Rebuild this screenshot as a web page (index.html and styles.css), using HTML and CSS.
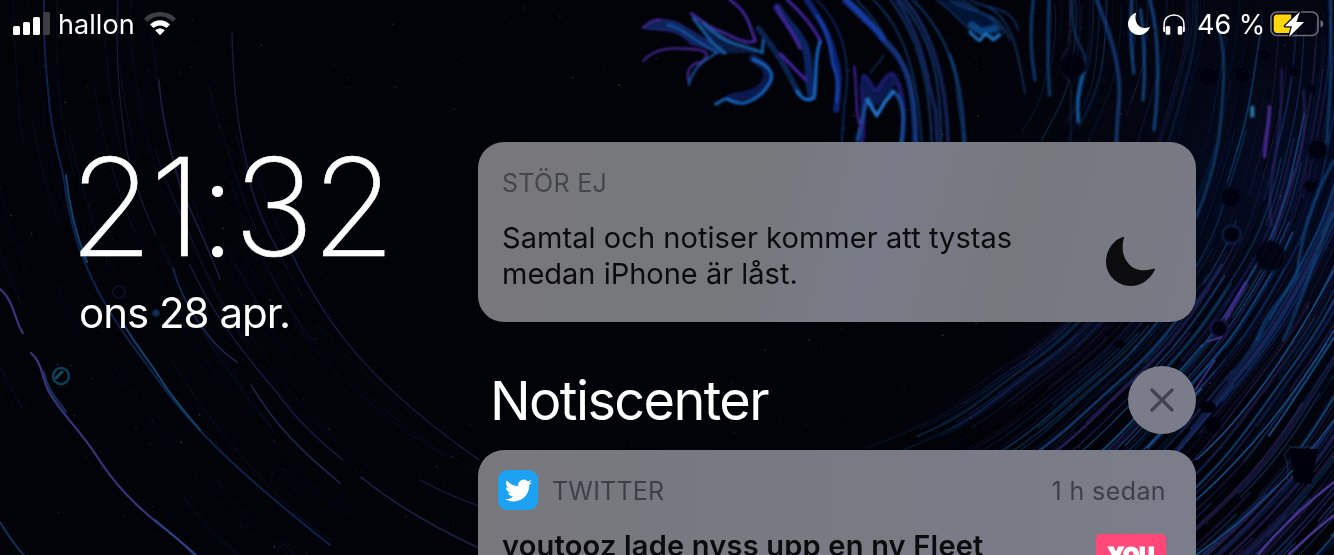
FILE: index.html
```html
<!DOCTYPE html>
<html lang="sv">
<head>
<meta charset="utf-8">
<title>Låsskärm</title>
<link rel="stylesheet" href="styles.css">
</head>
<body>
<svg class="wallpaper" viewBox="0 0 1334 555" aria-hidden="true">
  <defs>
    <filter id="soft" x="-10%" y="-10%" width="120%" height="120%"><feGaussianBlur stdDeviation="0.7"/></filter>
    <filter id="paint" x="-10%" y="-10%" width="120%" height="120%"><feTurbulence type="fractalNoise" baseFrequency="0.04" numOctaves="2" seed="4" result="n"/><feDisplacementMap in="SourceGraphic" in2="n" scale="5" xChannelSelector="R" yChannelSelector="G"/><feGaussianBlur stdDeviation="3.2"/></filter>
    <radialGradient id="haze" gradientUnits="userSpaceOnUse" cx="1290" cy="190" r="380">
      <stop offset="0" stop-color="#07133a"/><stop offset="1" stop-color="#020309" stop-opacity="0"/>
    </radialGradient>
  </defs>
  <rect width="1334" height="555" fill="#020309"/>
  <rect width="1334" height="555" fill="url(#haze)" opacity=".55"/>
  <g id="streaks" fill="none" filter="url(#soft)" stroke-linecap="round"></g>

  <!-- long arcs on the left -->
  <g fill="none" filter="url(#soft)" stroke-linecap="round">
    <g opacity=".6">
    <path d="M44 0C43 40 46 75 50 110C55 150 62 165 64 180C70 225 80 255 96 287C115 325 140 355 158 380C190 425 235 470 330 545" stroke="#18397a" stroke-width="2"/>
    <path d="M66 175C70 215 78 240 87 262M124 325C138 348 150 362 160 378C170 395 185 412 200 430" stroke="#2069ab" stroke-width="2"/>
    </g>
    <path d="M0 289C14 300 16 325 23 333M31 353C42 362 42 378 48 390C58 410 80 430 96 455C115 485 135 505 160 525C170 533 182 542 196 555" stroke="#4c3d96" stroke-width="2.2" opacity=".8"/>
    <path d="M44 372C47 390 58 400 66 412M155 520C170 532 182 542 194 555M0 522C8 535 16 547 24 555" stroke="#1c518e" stroke-width="2" opacity=".6"/>
    <g opacity=".6">
    <path d="M118 0C115 60 120 105 126 147C132 180 145 210 156 235" stroke="#302659" stroke-width="1.2"/>
    <path d="M159 80C162 120 170 150 180 185C192 215 205 240 220 279" stroke="#35306d" stroke-width="1.5"/>
    <path d="M232 33C233 80 236 120 246 160C250 190 260 220 278 250" stroke="#28235a" stroke-width="1.5"/>
    <path d="M173 268C183 305 210 345 237 362M251 385C275 425 300 450 340 483M361 477C395 505 440 530 479 548" stroke="#303d79" stroke-width="1.5"/>
    <path d="M190 265C210 310 240 350 275 390C300 425 325 445 343 460M290 250C330 335 380 390 479 460M420 480Q448 495 479 506" stroke="#2a2b6b" stroke-width="1.4"/>
    <ellipse cx="61" cy="376" rx="8" ry="8" stroke="#15668c" stroke-width="2.5"/><path d="M56 378L62 372" stroke="#1b7899" stroke-width="3"/>
    <circle cx="119" cy="292" r="6" stroke="#0c1030" stroke-width="3"/><circle cx="156" cy="313" r="3" fill="#1c5b9b" stroke="#103868" stroke-width="2"/>
    </g>
  </g>
  <ellipse cx="28" cy="343" rx="9" ry="9" fill="#020309"/>

  <!-- marbled paint at the top -->
  <g transform="scale(.33333) translate(1800 0)" fill="none" filter="url(#paint)" stroke-linecap="round" stroke-linejoin="round" opacity=".92">
    <path d="M128 83C165 50 220 55 260 85L380 158C350 170 310 130 275 133C225 75 170 95 128 83Z" fill="#0b285f" stroke="#272985" stroke-width="5"/>
    <path d="M128 83C145 70 155 58 180 59M130 183C170 135 235 145 290 148C330 155 325 165 305 186C280 190 260 200 264 240" stroke="#4a2b9b" stroke-width="7"/>
    <path d="M203 75C248 83 270 115 352 158C300 185 278 212 266 254" stroke="#1755a5" stroke-width="7"/>
    <path d="M273 40C300 90 330 130 375 160L487 158C400 130 350 100 273 40Z" fill="#0a1d4c"/>
    <path d="M273 40C315 70 330 83 370 98C405 113 440 136 467 122C448 85 451 42 390 0" stroke="#4629a5" stroke-width="9"/>
    <path d="M280 55C320 105 330 130 375 160M310 70C390 143 415 127 487 158L490 118" stroke="#1660a8" stroke-width="9"/>
    <path d="M460 175C510 205 513 225 488 260C455 290 421 286 392 294" stroke="#0a1f56" stroke-width="26"/>
    <path d="M460 178C535 208 525 241 483 283C448 310 418 320 382 297C370 293 360 309 347 312" stroke="#1768c9" stroke-width="9"/>
    <path d="M475 85C560 190 575 248 598 281" stroke="#0d2859" stroke-width="17"/>
    <path d="M532 22C565 75 590 90 613 135C633 180 619 215 635 288" stroke="#10286b" stroke-width="24"/>
    <path d="M530 20C552 70 585 105 600 145M562 0C600 33 645 85 662 125M542 162L617 240" stroke="#4525a5" stroke-width="10"/>
    <path d="M590 273C608 299 622 305 642 294C652 245 641 176 660 126" stroke="#196bca" stroke-width="10"/>
    <path d="M620 0C660 55 690 105 705 175C724 225 714 270 709 330" stroke="#10277d" stroke-width="18"/>
    <path d="M651 48C690 100 690 155 700 200C715 230 715 270 710 305" stroke="#1745b4" stroke-width="9"/>
    <path d="M650 0C735 80 755 200 733 315L725 430" stroke="#112f71" stroke-width="5"/>
    <path d="M735 0C775 45 830 85 855 126C915 180 944 245 946 430" stroke="#12307f" stroke-width="17"/>
    <path d="M740 0C780 35 815 70 850 115" stroke="#163fb0" stroke-width="16"/>
    <path d="M770 0C820 50 840 85 860 120C920 180 945 250 950 430M820 0C905 80 954 205 965 430" stroke="#154a8a" stroke-width="4"/>
    <path d="M900 0C990 110 1023 215 1023 430M872 0C940 90 990 215 995 430M938 0C1025 80 1073 200 1075 300C1083 360 1090 390 1090 430" stroke="#103664" stroke-width="7"/>
    <path d="M890 0C980 135 980 250 1007 330L1012 430M915 0C1000 100 1040 240 1044 430" stroke="#142660" stroke-width="11"/>
    <path d="M785 430C800 310 779 270 792 228C812 236 810 270 828 273C845 260 859 220 878 223C908 262 918 330 905 430" stroke="#1d1c75" stroke-width="15"/>
    <path d="M792 250L828 305L878 245" stroke="#101c55" stroke-width="24"/>
    <path d="M772 420C782 380 792 330 803 295M905 425C912 365 915 302 880 274" stroke="#16509f" stroke-width="11"/>
    <path d="M803 300L830 347L854 307L880 274" stroke="#207bd9" stroke-width="11"/>
    <path d="M763 200C772 285 765 355 785 385" stroke="#3d2190" stroke-width="8"/>
    <path d="M812 220C831 182 837 197 851 165" stroke="#103357" stroke-width="5"/>
    <path d="M1010 0C1060 35 1078 65 1110 90L1143 104L1190 112L1200 82L1160 48L1090 0" fill="#06183a" stroke="#102c58" stroke-width="6"/>
    <path d="M1115 75L1145 95L1185 85" stroke="#10498c" stroke-width="20"/>
    <path d="M1110 98L1138 122L1157 101L1180 120L1200 105" stroke="#2376c8" stroke-width="9"/>
    <path d="M1050 0C1120 55 1185 10 1230 120M1110 0C1180 34 1230 15 1255 90M1130 10C1230 30 1250 130 1275 280M1070 5C1140 40 1180 40 1212 100" stroke="#123568" stroke-width="5"/>
  </g>

  <g transform="scale(.33333) translate(2850 0)" fill="none" filter="url(#paint)" stroke-linecap="round" opacity=".85">
    <path d="M0 165C30 240 40 330 45 430" stroke="#133e77" stroke-width="9"/>
    <path d="M250 0Q234 120 255 240M297 0C295 80 290 180 299 285" stroke="#123c78" stroke-width="10"/>
    <path d="M440 0C480 100 510 190 508 280C506 335 499 380 500 430" stroke="#153b77" stroke-width="12"/>
    <path d="M545 0Q538 120 552 220M572 30Q590 190 579 300M600 0C625 100 631 230 612 390" stroke="#164887" stroke-width="10"/>
    <path d="M367 0C364 70 375 120 398 152C420 188 395 235 385 270Q380 315 384 370" stroke="#193e75" stroke-width="6"/>
    <path d="M401 215C388 255 378 300 385 365" stroke="#1765b4" stroke-width="11"/>
    <path d="M360 0V140C330 165 320 210 350 235C370 250 362 290 362 430" stroke="#16203d" stroke-width="5"/>
    <path d="M800 70C835 160 820 280 806 420C790 510 765 590 739 650" stroke="#154578" stroke-width="8"/>
    <path d="M958 320C960 360 945 420 944 470M887 850L827 955" stroke="#5732aa" stroke-width="10"/>
    <path d="M995 210C1000 450 942 550 965 680M1060 270C1085 510 990 560 970 720" stroke="#2d2b6b" stroke-width="6"/>
    <path d="M1140 0Q1150 200 1130 430M1152 480C1110 560 1060 650 1040 830C1010 880 950 930 920 1020M1152 640C1090 770 1060 900 1000 1020" stroke="#14477e" stroke-width="8"/>
    <path d="M907 323V347" stroke="#2b85b4" stroke-width="13"/>
    <g fill="#030510" stroke="#0a0d22" stroke-width="4">
      <circle cx="368" cy="198" r="38"/><circle cx="775" cy="229" r="29"/><circle cx="877" cy="226" r="26"/><circle cx="1032" cy="215" r="17"/><circle cx="1090" cy="267" r="12"/><circle cx="1102" cy="449" r="30"/><circle cx="842" cy="592" r="30"/><circle cx="960" cy="768" r="46"/><circle cx="1080" cy="560" r="20"/><circle cx="945" cy="165" r="20"/>
      <circle cx="845" cy="704" r="28" stroke="#1c2f63"/><circle cx="808" cy="986" r="27" stroke="#2c2260"/>
    </g>
  </g>
  <g filter="url(#soft)" fill="none">
    <path d="M1258 555Q1286 520 1334 482M1288 555Q1310 534 1334 515" stroke="#46318c" stroke-width="2.5"/>
    <path d="M1206 342L1222 337M1195 390L1215 360" stroke="#3d2b7c" stroke-width="2"/>
    <path d="M1287 480Q1290 465 1284 455L1290 447H1316" stroke="#12305a"/>
    <path d="M1196 500Q1275 430 1334 330M1196 460Q1265 400 1334 270M1196 555Q1275 500 1334 420" stroke="#13487c" stroke-width="1.6"/>
    <g fill="#030510"><ellipse cx="1208" cy="407" rx="8" ry="6"/><circle cx="1213" cy="425" r="8"/><path d="M1290 449L1318 449L1311 484L1294 482Z"/><ellipse cx="1119" cy="344" rx="6" ry="4"/></g>
  </g>
  <g id="stars"></g>
</svg>

<div class="screen">
  <header class="status">
    <div class="status-left">
      <svg class="bars" viewBox="0 0 37 24"><rect y="14" width="7" height="9" rx="1.6"/><rect x="10" y="10" width="7" height="13" rx="1.6"/><rect x="20" y="5" width="7" height="18" rx="1.6"/><rect class="dim" x="30" width="7" height="23" rx="1.6"/></svg>
      <span class="carrier">hallon</span>
      <svg class="wifi" viewBox="0 0 32 24"><path class="dim" d="M0 6.4C9-2.1 23-2.1 32 6.4L28.8 9.8C21 2.7 11 2.7 3.2 9.8Z"/><path d="M6 12.5C11.8 6.8 20.2 6.8 26 12.5L22.5 16C18.8 12.5 13.2 12.5 9.5 16Z"/><path d="M11.2 18.2C14 15.8 18 15.8 20.8 18.2L16 23.2Z"/></svg>
    </div>
    <div class="status-right">
      <svg class="moon-small" viewBox="0 0 49 49"><path d="M17.5 0C19 0 17.6 1.5 17.2 4C14 20 24 34 38 33.3C44 33 48 31 49 32.2C49.5 33 41 49 25 49C11 49 0 38 0 24.5C0 11 11 .5 17.5 0Z"/></svg>
      <svg class="phones" viewBox="0 0 22 21"><path d="M1.1 18V10.5C1.1 4.6 5.2.9 11 .9S20.9 4.6 20.9 10.5V18" fill="none" stroke="#fff" stroke-width="1.5"/><rect x="2.7" y="12" width="4.6" height="8.7" rx="1.5"/><rect x="14.7" y="12" width="4.6" height="8.7" rx="1.5"/><path d="M.4 13H2V18.5Q.4 17 .4 15ZM20 13H21.6V15Q21.6 17 20 18.5Z"/></svg>
      <span class="percent">46 %</span>
      <svg class="battery" viewBox="0 0 54 27"><rect x="1" y="1" width="47" height="23.5" rx="6" fill="none" stroke="#6c6c73" stroke-width="1.7"/><path d="M50.5 9C54.2 10.3 54.2 15.2 50.5 16.5Z" fill="#6c6c73"/><path d="M7.2 3.6H21.2V21.9H7.2Q3.7 21.9 3.7 18.4V7.1Q3.7 3.6 7.2 3.6Z" fill="#ffd60a"/><path class="bolt" d="M30 .4L14.8 15.2H22L19 25.9L34 11.1H26.5Z"/></svg>
    </div>
  </header>

  <main class="content">
    <section class="clock">
      <div class="time">21:32</div>
      <div class="date">ons 28 apr.</div>
    </section>
    <section class="feed">
      <article class="card dnd">
        <div class="label">STÖR EJ</div>
        <div class="dnd-row">
          <p class="message"><span class="line-one">Samtal och notiser kommer att tystas</span><br><span class="line-two">medan iPhone är låst.</span></p>
          <svg class="moon" viewBox="0 0 49 49"><path d="M17.5 0C19 0 17.6 1.5 17.2 4C14 20 24 34 38 33.3C44 33 48 31 49 32.2C49.5 33 41 49 25 49C11 49 0 38 0 24.5C0 11 11 .5 17.5 0Z"/></svg>
        </div>
      </article>
      <div class="heading-row">
        <h1 class="heading">Notiscenter</h1>
        <button class="close" aria-label="Rensa"><svg viewBox="0 0 24 24"><path d="M2 2L22 22M22 2L2 22"/></svg></button>
      </div>
      <article class="card tweet">
        <div class="tweet-head">
          <span class="app-icon"><svg viewBox="0 0 24 24"><path d="M23.95 4.57a10 10 0 0 1-2.82.77 4.96 4.96 0 0 0 2.16-2.72c-.95.55-2 .95-3.13 1.18a4.92 4.92 0 0 0-8.38 4.48C7.69 8.09 4.07 6.13 1.64 3.16a4.9 4.9 0 0 0 1.52 6.57 4.9 4.9 0 0 1-2.23-.61v.06a4.92 4.92 0 0 0 3.95 4.83 5 5 0 0 1-2.21.08 4.94 4.94 0 0 0 4.6 3.42A9.87 9.87 0 0 1 0 19.54a14 14 0 0 0 7.55 2.21c9.05 0 14-7.5 14-13.98 0-.21 0-.42-.02-.63a9.9 9.9 0 0 0 2.42-2.57Z"/></svg></span>
          <span class="app-name">TWITTER</span>
          <span class="ago">1 h sedan</span>
        </div>
        <div class="tweet-body">
          <span class="tweet-title">youtooz lade nyss upp en ny Fleet</span>
          <span class="thumb">YOU</span>
        </div>
      </article>
    </section>
  </main>
</div>
<script src="wallpaper.js"></script>
</body>
</html>
```
FILE: styles.css
```css
* { box-sizing: border-box; }
body { margin: 0; width: 1334px; height: 555px; overflow: hidden; background: #020309; color: #fff; font-family: Inter, "Liberation Sans", sans-serif; }
.wallpaper { position: absolute; inset: 0; width: 1334px; height: 555px; z-index: -1; }
.screen { width: 1334px; height: 555px; overflow: hidden; }
.status { display: flex; justify-content: space-between; height: 48px; padding: 0 10px 0 13px; }
.status-left, .status-right { display: flex; align-items: center; height: 48px; }
.status svg { fill: #fff; display: block; }
.status .dim { fill: #3d3d43; }
.bars { width: 37px; height: 24px; }
.carrier { margin-left: 8px; width: 78px; font-size: 27px; letter-spacing: .05px; white-space: nowrap; }
.wifi { width: 32px; height: 24px; margin-left: 8px; }
.moon-small { width: 22px; height: 22px; }
.phones { width: 22px; height: 21px; margin-left: 13px; }
.percent { width: 73px; margin-left: 12px; font-size: 27px; white-space: nowrap; letter-spacing: 0; }
.battery { width: 54px; height: 27px; overflow: visible; }
.status .bolt { stroke: #080b17; stroke-width: 2.4; paint-order: stroke; stroke-linejoin: round; }
.content { display: grid; grid-template-columns: 398px 718px; height: 507px; padding-left: 80px; }
.clock { padding-top: 94px; }
.time { font-size: 136px; font-weight: 200; -webkit-text-stroke: .6px #fff; line-height: 130px; height: 146px; letter-spacing: -2.9px; margin-left: -11px; white-space: nowrap; }
.date { font-size: 42px; line-height: 50px; letter-spacing: -1px; margin-left: -1px; white-space: nowrap; }
.feed { display: flex; flex-direction: column; padding-top: 94px; }
.card { flex: none; border-radius: 26px; color: #0b0b0d; background: linear-gradient(105deg, #78787b 0%, #77787c 38%, #797b88 55%, #77787e 73%, #797a86 100%); }
.dnd { height: 180px; padding: 24px 41px 0 24px; }
.label { height: 34px; line-height: 34px; font-size: 25px; letter-spacing: .3px; color: #45464b; white-space: nowrap; }
.dnd-row { display: flex; justify-content: space-between; padding-top: 20px; }
.message { margin: 0; font-size: 29px; line-height: 36px; white-space: nowrap; }
.line-one { letter-spacing: .06px; }
.moon { width: 49px; height: 49px; margin-top: 17px; fill: #0d0d0f; }
.heading-row { flex: none; display: flex; align-items: center; justify-content: space-between; height: 68px; margin: 44px 0 16px; padding-left: 12px; }
.heading { margin: 0; font-size: 54px; font-weight: 400; letter-spacing: -1.6px; }
.close { display: grid; place-items: center; width: 68px; height: 68px; padding: 0; border: 0; border-radius: 50%; background: #7b7c8a; }
.close svg { width: 24px; height: 24px; fill: none; stroke: #404252; stroke-width: 3.2; stroke-linecap: round; }
.tweet { height: 180px; padding: 20px 30px 0 20px; background: linear-gradient(90deg, #77777c, #797a84 55%, #7b7d8a); }
.tweet-head { display: flex; align-items: center; height: 40px; font-size: 25px; color: #3e3f49; }
.app-icon { display: grid; place-items: center; width: 40px; height: 40px; border-radius: 9px; background: #1da1f2; }
.app-icon svg { width: 27px; height: 27px; fill: #fff; }
.app-name { margin-left: 14px; padding-top: 2px; letter-spacing: .2px; }
.ago { margin-left: auto; padding-top: 2px; letter-spacing: .4px; }
.tweet-body { display: flex; justify-content: space-between; padding: 18px 0 0 4px; }
.tweet-title { font-size: 29px; line-height: 36px; font-weight: 600; letter-spacing: .2px; white-space: nowrap; }
.thumb { display: block; width: 70px; height: 70px; margin-top: 6px; border-radius: 5px; background: #ff477a; color: #fff; font-size: 21px; font-weight: 900; line-height: 44px; text-align: center; -webkit-text-stroke: 1.2px #fff; }
```
FILE: wallpaper.js
```js
// Draws the fine concentric streaks and dust of the wallpaper.
(function () {
  var seed = 28;
  function rnd() { seed = (seed * 16807) % 2147483647; return seed / 2147483647; }
  var ns = "http://www.w3.org/2000/svg";
  var streaks = document.getElementById("streaks");
  var stars = document.getElementById("stars");
  function arc(r, from, to, color, width, opacity) {
    var d = "", p = rnd() * 0.8;
    for (var a = from; a <= to; a += 1.5) {
      var rr = r + Math.sin(a / 6 + p + r / 60) * 3 + Math.sin(a / 2.3 + r / 25) * 0.7;
      var t = a * Math.PI / 180;
      d += (d ? "L" : "M") + (738 + rr * Math.cos(t)).toFixed(1) + " " + (rr * Math.sin(t)).toFixed(1);
    }
    var el = document.createElementNS(ns, "path");
    el.setAttribute("d", d);
    el.setAttribute("stroke", color);
    el.setAttribute("stroke-width", width);
    el.setAttribute("opacity", opacity);
    streaks.appendChild(el);
  }
  var blues = ["#113f73", "#0d2b5e", "#181c4b", "#261f50", "#134a7a", "#0b1c44", "#05060f", "#1b1638"];
  for (var i = 0; i < 400; i++) {
    var r = 455 + rnd() * 385, from = -2 + rnd() * 52;
    if (r < 490) from = 25 + rnd() * 20;
    var fade = r < 540 ? 0.5 : 1;
    arc(r, from, from + 8 + rnd() * 26, blues[Math.floor(rnd() * 8)], 0.8 + rnd() * 1.8, (0.35 + rnd() * 0.6) * fade);
  }
  // faint threads between the marbled paint and the right edge
  for (i = 0; i < 45; i++) {
    from = -2 + rnd() * 3;
    arc(300 + rnd() * 170, from, from + 5 + rnd() * 25, blues[Math.floor(rnd() * 6)], 0.7 + rnd(), 0.2 + rnd() * 0.25);
  }
  for (i = 0; i < 60; i++) {
    var s = 112 + rnd() * 58;
    arc(510 + rnd() * 330, s, s + 6 + rnd() * 18, rnd() < 0.5 ? "#1b1740" : "#10203f", 0.8, 0.3 + rnd() * 0.4);
  }
  for (i = 0; i < 420; i++) {
    var x = rnd() * 1334, y = rnd() * 555;
    if (Math.hypot(x - 600, y - 150) < 250 && y > 120) continue;
    var c = document.createElementNS(ns, "circle");
    c.setAttribute("cx", x); c.setAttribute("cy", y);
    c.setAttribute("r", 0.4 + rnd() * 0.5);
    c.setAttribute("fill", rnd() < 0.5 ? "#50537c" : "#514553");
    c.setAttribute("opacity", 0.2 + rnd() * 0.5);
    stars.appendChild(c);
  }
})();
```
